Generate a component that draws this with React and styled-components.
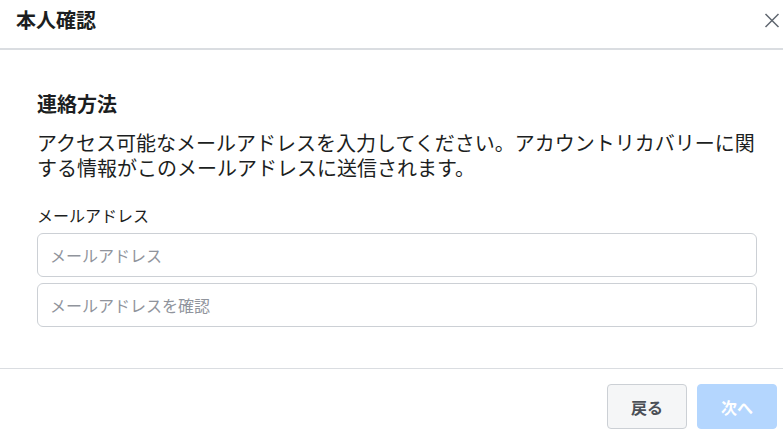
import React from 'react';
import styled, { createGlobalStyle } from 'styled-components';

const GlobalStyle = createGlobalStyle`
  html, body {
    margin: 0;
    padding: 0;
    background: #fff;
  }
  body {
    font-family: "Noto Sans CJK JP", "Noto Sans", sans-serif;
    color: #1c1e21;
  }
`;

const Dialog = styled.div`
  width: 783px;
  height: 437px;
  overflow: hidden;
  background: #fff;
`;

const Header = styled.header`
  height: 50px;
  display: flex;
  align-items: flex-start;
  justify-content: space-between;
  padding: 8px 3px 0 16px;
  box-sizing: border-box;
  border-bottom: 2px solid #dadde1;
`;

const Title = styled.h1`
  margin: 0;
  font-size: 20px;
  line-height: 24px;
  font-weight: 700;
  color: #1c1e21;
`;

const CloseButton = styled.button`
  border: none;
  background: none;
  padding: 0;
  margin-top: 5px;
  width: 16px;
  height: 15px;
  display: flex;
  cursor: pointer;
`;

const Body = styled.section`
  padding: 42px 26px 41px 37px;
  border-bottom: 1px solid #dadde1;
`;

const Heading = styled.h2`
  margin: 0;
  font-size: 20px;
  line-height: 24px;
  font-weight: 700;
`;

const Description = styled.p`
  margin: 14px 0 0;
  font-size: 20px;
  line-height: 25px;
`;

const Label = styled.label`
  display: block;
  margin-top: 25px;
  font-size: 16px;
  line-height: 20px;
`;

const Fields = styled.div`
  display: flex;
  flex-direction: column;
  gap: 6px;
  margin-top: 8px;
`;

const Input = styled.input`
  height: 44px;
  box-sizing: border-box;
  border: 1px solid #ccd0d5;
  border-radius: 6px;
  padding: 0 12px;
  font-family: inherit;
  font-size: 16px;
  color: #1c1e21;
  outline: none;
  &::placeholder {
    color: #90949c;
  }
`;

const Footer = styled.footer`
  display: flex;
  justify-content: flex-end;
  gap: 10px;
  padding: 15px 6px 0 0;
`;

const Button = styled.button`
  width: 80px;
  height: 45px;
  box-sizing: border-box;
  border-radius: 4px;
  font-family: inherit;
  font-size: 16px;
  font-weight: 700;
  cursor: pointer;
  border: 1px solid ${p => (p.$primary ? '#b4d6fe' : '#ccd0d5')};
  background: ${p => (p.$primary ? '#b4d6fe' : '#f5f6f7')};
  color: ${p => (p.$primary ? '#fff' : '#4b4f56')};
`;

export default function App() {
  return (
    <Dialog>
      <GlobalStyle />
      <Header>
        <Title>本人確認</Title>
        <CloseButton aria-label="閉じる">
          <svg width="16" height="15" viewBox="0 0 16 15">
            <path d="M1.5 1L14.5 14M14.5 1L1.5 14" stroke="#606770" strokeWidth="1.5" />
          </svg>
        </CloseButton>
      </Header>
      <Body>
        <Heading>連絡方法</Heading>
        <Description>
          アクセス可能なメールアドレスを入力してください。アカウントリカバリーに関する情報がこのメールアドレスに送信されます。
        </Description>
        <Label>メールアドレス</Label>
        <Fields>
          <Input type="email" placeholder="メールアドレス" />
          <Input type="email" placeholder="メールアドレスを確認" />
        </Fields>
      </Body>
      <Footer>
        <Button>戻る</Button>
        <Button $primary disabled>次へ</Button>
      </Footer>
    </Dialog>
  );
}
